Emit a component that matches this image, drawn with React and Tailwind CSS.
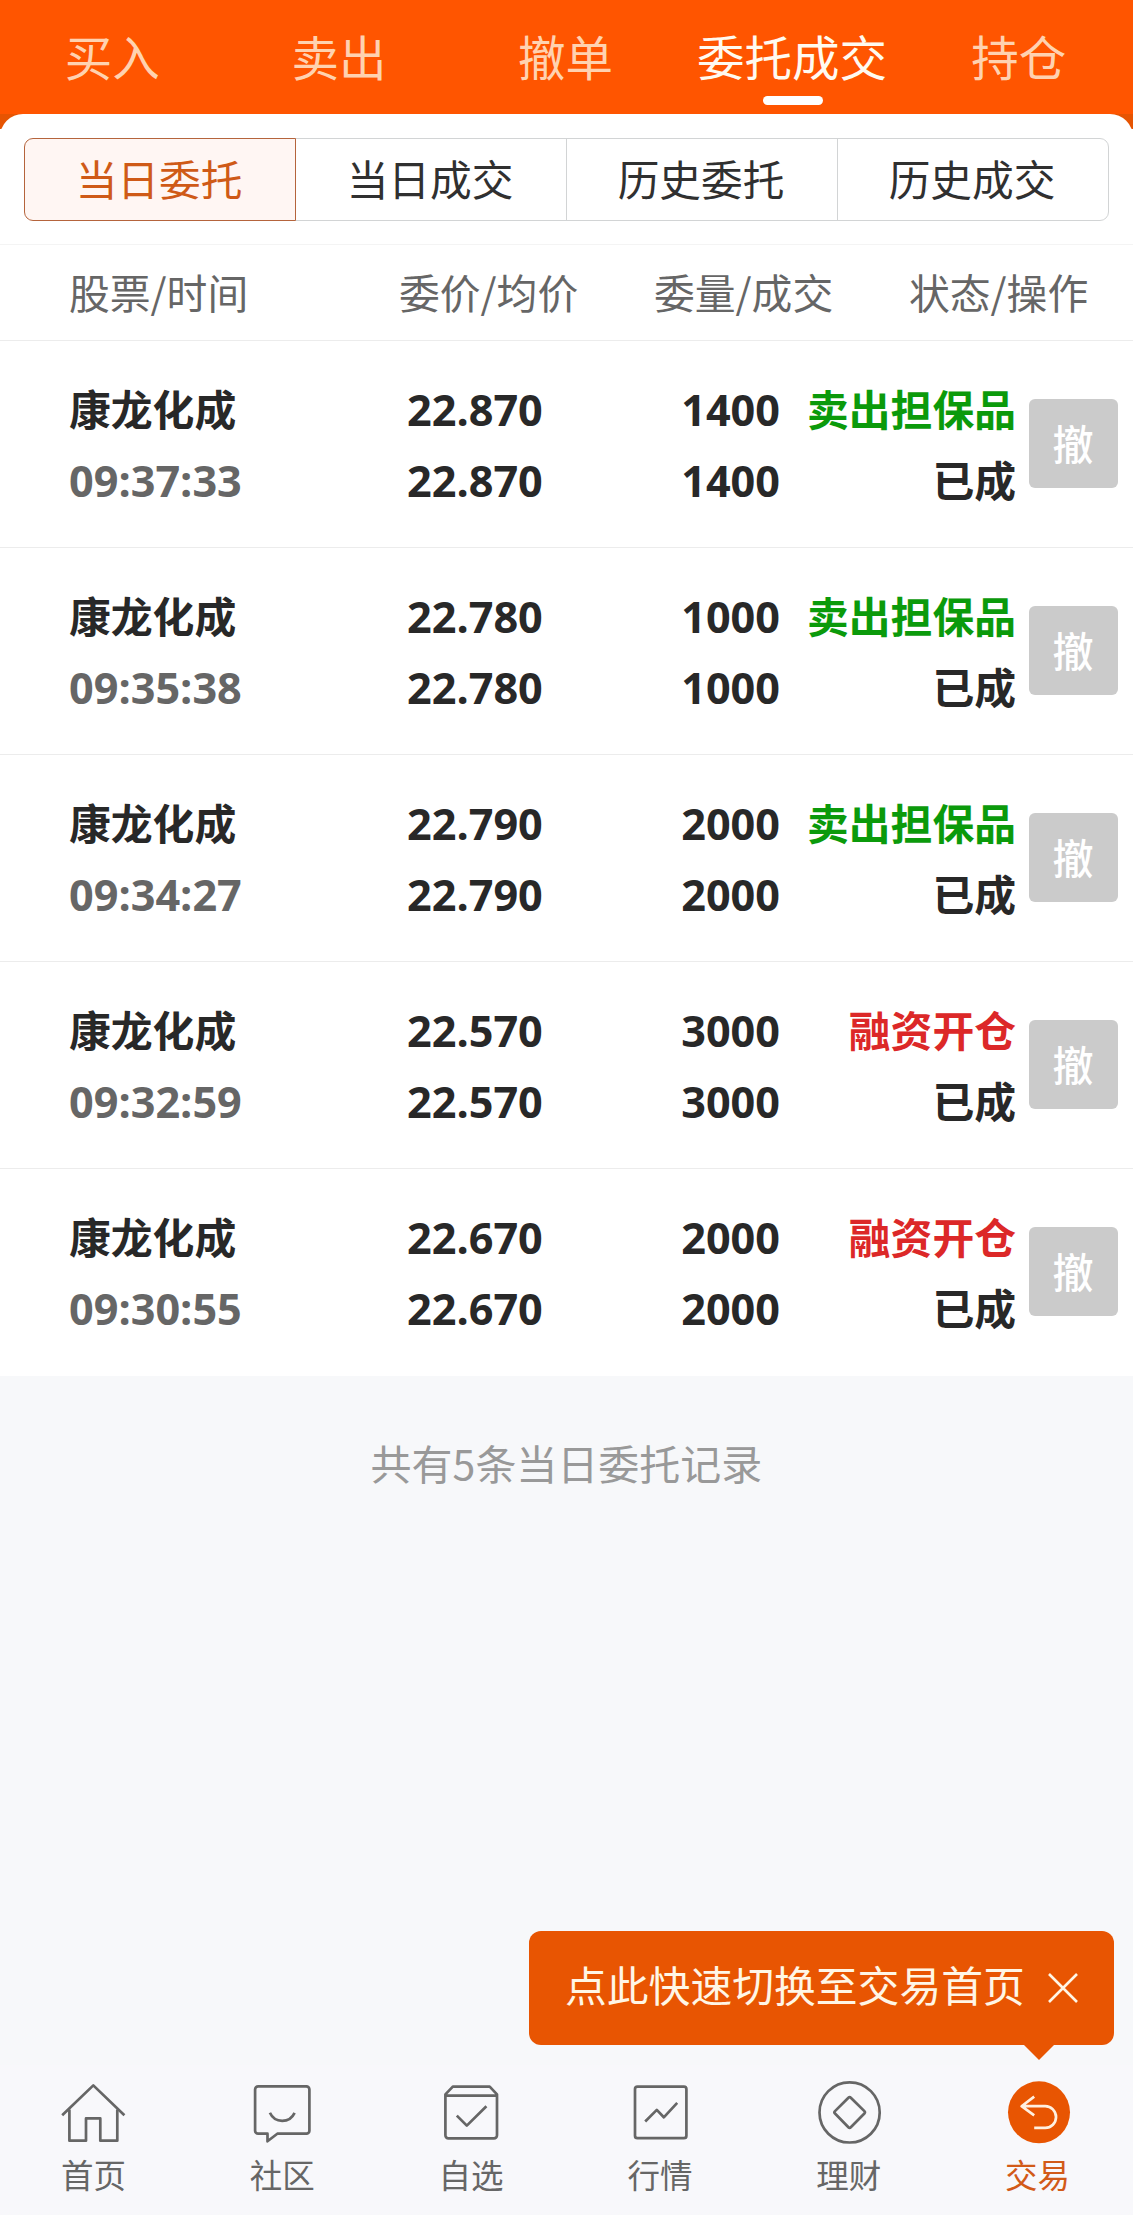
import { useState } from "react";

const navTabs = ["买入", "卖出", "撤单", "委托成交", "持仓"];
const segments = ["当日委托", "当日成交", "历史委托", "历史成交"];

const orders = [
  { id: 1, name: "康龙化成", time: "09:37:33", price: "22.870", avg: "22.870", amount: 1400, filled: 1400, type: "卖出担保品", side: "sell" },
  { id: 2, name: "康龙化成", time: "09:35:38", price: "22.780", avg: "22.780", amount: 1000, filled: 1000, type: "卖出担保品", side: "sell" },
  { id: 3, name: "康龙化成", time: "09:34:27", price: "22.790", avg: "22.790", amount: 2000, filled: 2000, type: "卖出担保品", side: "sell" },
  { id: 4, name: "康龙化成", time: "09:32:59", price: "22.570", avg: "22.570", amount: 3000, filled: 3000, type: "融资开仓", side: "buy" },
  { id: 5, name: "康龙化成", time: "09:30:55", price: "22.670", avg: "22.670", amount: 2000, filled: 2000, type: "融资开仓", side: "buy" },
];

// line icons for the bottom bar, all on a 64px grid
const HomeIcon = () => (
  <>
    <path d="M.2 34.3 31.3 4.4 62.4 34.3" />
    <path d="M7.4 28.5v31.2H24V37.4h14.3v22.3h17V28.5" />
  </>
);

const CommunityIcon = () => (
  <>
    <path d="M7 5.4h48.4a3 3 0 0 1 3 3v41.3a3 3 0 0 1-3 3H26.3l-9.8 7.6v-7.6H7.1a3 3 0 0 1-3-3V8.4a3 3 0 0 1 3-3z" />
    <path d="M18.9 31.8c5 10.8 19.6 10.8 24.7 0" />
  </>
);

const WatchlistIcon = () => (
  <>
    <path d="M5.4 14.7v39.6a3 3 0 0 0 3 3H54a3 3 0 0 0 3-3V13.4l-7.3-7.8H12.8l-7.4 7.8v1.3H57" />
    <path d="m16.8 34.6 10 10 19.6-19.4" />
  </>
);

const MarketIcon = () => (
  <>
    <rect x="6" y="5.6" width="51.4" height="51.6" rx="2.5" />
    <path d="m16.2 40.5 11.6-11.6 7 7.4 13.4-14.5" />
  </>
);

const WealthIcon = () => (
  <>
    <circle cx="31.6" cy="31.4" r="30.1" />
    <path d="m30.4 16.7-13.4 13.4q-1.2 1.2 0 2.4l13.4 13.8q1.2 1.2 2.4 0l13.6-13.8q1.2-1.2 0-2.4L32.8 16.7q-1.2-1.2-2.4 0z" />
  </>
);

const TradeIcon = () => (
  <>
    <circle cx="32" cy="31.3" r="31" fill="#e85502" stroke="none" />
    <path stroke="#fff0e0" d="M27.2 15.6 14.6 25.2 27.2 34.4M15 25.2H38.2a10.8 10.8 0 0 1 0 21.7H27.2" />
  </>
);

const footerTabs = [
  { label: "首页", Icon: HomeIcon },
  { label: "社区", Icon: CommunityIcon },
  { label: "自选", Icon: WatchlistIcon },
  { label: "行情", Icon: MarketIcon },
  { label: "理财", Icon: WealthIcon },
  { label: "交易", Icon: TradeIcon },
];

function App() {
  const [activeNav, setActiveNav] = useState("委托成交");
  const [activeSegment, setActiveSegment] = useState("当日委托");
  const [activeFooter, setActiveFooter] = useState("交易");
  const [showTip, setShowTip] = useState(true);

  return (
    <div className="flex h-[2215px] w-[1133px] flex-col overflow-hidden bg-[#f7f8fa] font-['Noto_Sans_CJK_SC',sans-serif] text-[#282828]">
      {/* Top navigation */}
      <nav className="grid h-[114px] shrink-0 grid-cols-5 bg-[#ff5500]">
        {navTabs.map((tab) => (
          <button
            key={tab}
            onClick={() => setActiveNav(tab)}
            className={`relative h-28 pr-0.5 text-[47.5px] leading-[112px] whitespace-nowrap ${
              activeNav === tab ? "text-[#fffaf0]" : "text-[#ffd2b0]"
            }`}
          >
            {tab}
            {activeNav === tab && (
              <span className="absolute top-24 left-1/2 h-[9px] w-[60px] -translate-x-1/2 rounded-full bg-white"></span>
            )}
          </button>
        ))}
      </nav>

      {/* the darker strip shows behind the rounded corners */}
      <div className="shrink-0 bg-[linear-gradient(#e65402_15px,#fff_15px)]">
        <div className="h-[131px] rounded-t-[23px] border-b border-[#f4f4f4] bg-white px-6 pt-6">
          <div className="flex h-[83px]">
            {segments.map((item) => (
              <button
                key={item}
                onClick={() => setActiveSegment(item)}
                className={`flex-1 border pr-0.5 pb-0.5 text-[41.7px] leading-[79px] not-first:-ml-px first:rounded-l-[9px] last:rounded-r-[9px] ${
                  activeSegment === item
                    ? "z-10 border-[#b5643c] bg-[#fff6f3] text-[#cf5a17]"
                    : "border-[#d2d4d5] text-[#303030]"
                }`}
              >
                {item}
              </button>
            ))}
          </div>
        </div>
      </div>

      {/* Orders table */}
      <div className="grid h-24 shrink-0 grid-cols-[330px_255px_255px_1fr] border-b border-[#ececec] bg-white pl-[69px] text-[40.8px] leading-[93px] text-[#666]">
        <span>股票/时间</span>
        <span>委价/均价</span>
        <span>委量/成交</span>
        <span>状态/操作</span>
      </div>

      {orders.map((order) => (
        <div
          key={order.id}
          className="flex h-[207px] shrink-0 items-center border-b border-[#ececec] bg-white pr-[15px] pb-px pl-[69px] text-[41.8px] leading-[71px] font-bold last-of-type:border-white"
        >
          <div className="w-[338px]">
            <div>{order.name}</div>
            <div className="pt-0.5 font-['Open_Sans'] text-[43.2px] leading-[69px] text-[#666]">{order.time}</div>
          </div>
          <div className="w-[180px] pt-0.5 font-['Open_Sans'] text-[43.2px]">
            <div>{order.price}</div>
            <div>{order.avg}</div>
          </div>
          <div className="w-[193px] pt-0.5 text-right font-['Open_Sans'] text-[43.2px]">
            <div>{order.amount}</div>
            <div>{order.filled}</div>
          </div>
          <div className="flex-1 text-right">
            <div className={order.side === "sell" ? "text-[#0b9a0b]" : "text-[#dc2828]"}>
              {order.type}
            </div>
            <div>已成</div>
          </div>
          <button className="ml-[13px] size-[89px] rounded-md bg-[#cbcbcb] pr-px pb-1 text-[41px] leading-[84px] font-medium text-white">
            撤
          </button>
        </div>
      ))}

      <p className="mt-14 text-center text-[41px] leading-[60px] text-[#999]">
        共有{orders.length}条当日委托记录
      </p>

      {/* Bottom bar */}
      <footer className="relative mt-auto grid h-[150px] shrink-0 grid-cols-6 bg-[#f8f8fb] pt-4">
        {showTip && (
          <div className="absolute right-[19px] bottom-[170px] flex h-[114px] w-[585px] items-center rounded-xl bg-[#e85502] pl-9 text-[41.8px] text-[#fff6e6]">
            <span className="-mt-2 whitespace-nowrap">点此快速切换至交易首页</span>
            <button onClick={() => setShowTip(false)} className="ml-[22px]">
              <svg viewBox="0 0 32 32" className="size-8" stroke="currentColor" strokeWidth="2.6">
                <path d="m2 2 28 28M30 2 2 30" />
              </svg>
            </button>
            <span className="absolute top-full right-[60px] h-[15px] w-[30px] bg-[#e85502] [clip-path:polygon(0_0,100%_0,50%_100%)]"></span>
          </div>
        )}
        {footerTabs.map(({ label, Icon }) => (
          <button
            key={label}
            onClick={() => setActiveFooter(label)}
            className={`flex flex-col items-center ${
              activeFooter === label ? "text-[#d25a18]" : "text-[#666]"
            }`}
          >
            <svg
              viewBox="0 0 64 64"
              className="size-16 overflow-visible"
              fill="none"
              stroke="currentColor"
              strokeWidth="2.7"
              strokeLinejoin="round"
            >
              <Icon />
            </svg>
            <span className="mt-[5px] pr-0.5 text-[32.5px] leading-[48px]">{label}</span>
          </button>
        ))}
      </footer>
    </div>
  );
}

export default App;
